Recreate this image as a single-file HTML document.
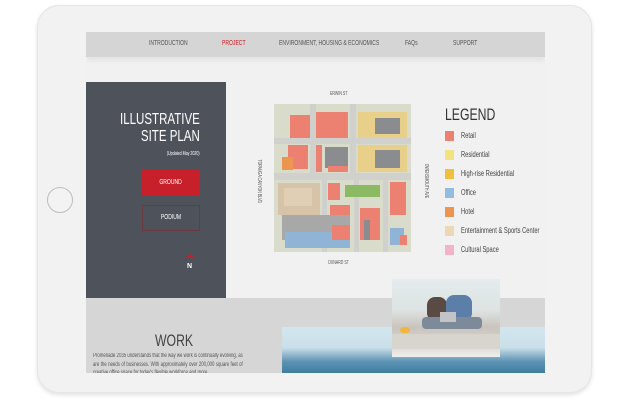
<!DOCTYPE html>
<html><head><meta charset="utf-8"><style>
*{margin:0;padding:0;box-sizing:border-box}
body{width:632px;height:400px;background:#fff;position:relative;overflow:hidden;font-family:"Liberation Sans",sans-serif}
.abs{position:absolute}
.c{display:inline-block;transform:scaleX(.72);transform-origin:left center;white-space:nowrap}
.cr{display:inline-block;transform:scaleX(.72);transform-origin:right center;white-space:nowrap}
.cc{display:inline-block;transform:scaleX(.72);transform-origin:center center;white-space:nowrap}
#frame{left:37px;top:5px;width:555px;height:388px;background:#f2f2f2;border-radius:22px;box-shadow:0 2px 4px rgba(0,0,0,.12),inset 0 0 0 1px #e6e6e6}
#btn{left:47px;top:187px;width:26px;height:26px;border-radius:50%;border:1px solid #bdbdbd;background:#f3f3f3}
#screen{left:86px;top:32px;width:459px;height:341px;background:#f1f1f1;overflow:hidden}
#nav{left:0;top:0;width:459px;height:25px;background:#d5d5d5;box-shadow:0 4px 5px rgba(0,0,0,.05)}
.nv{top:8px;font-size:7px;color:#555;white-space:nowrap}
#panel{left:0;top:50px;width:140px;height:216px;background:#4e535b}
.t{color:#fff;text-align:right;right:26px;font-size:16px;line-height:16px;width:120px}
#ground{left:56px;top:88px;width:58px;height:26px;background:#c8202a;color:#fff;font-size:7px;text-align:center;line-height:26px}
#podium{left:56px;top:123px;width:58px;height:26px;border:1px solid #6b3a40;color:#fff;font-size:7px;text-align:center;line-height:24px}
#gray{left:0;top:266px;width:459px;height:75px;background:#d6d6d6}
.lg{font-size:8px;color:#444;white-space:nowrap}
.sw{position:absolute;left:-16px;top:0;width:9px;height:10px}
</style></head><body>
<div id="frame" class="abs"></div>
<div id="btn" class="abs"></div>
<div id="screen" class="abs">
 <div id="gray" class="abs"></div>
 <div id="nav" class="abs">
  <div class="abs nv" style="left:63px"><span class="c">INTRODUCTION</span></div>
  <div class="abs nv" style="left:136px;color:#c8202a"><span class="c">PROJECT</span></div>
  <div class="abs nv" style="left:193px"><span class="c">ENVIRONMENT, HOUSING &amp; ECONOMICS</span></div>
  <div class="abs nv" style="left:319px"><span class="c">FAQs</span></div>
  <div class="abs nv" style="left:367px"><span class="c">SUPPORT</span></div>
 </div>
 <div id="panel" class="abs">
  <div class="abs t" style="top:30px"><span class="cr">ILLUSTRATIVE</span></div>
  <div class="abs t" style="top:47px"><span class="cr">SITE PLAN</span></div>
  <div class="abs t" style="top:69px;font-size:5px;line-height:6px"><span class="cr">(Updated May 2020)</span></div>
  <div id="ground" class="abs"><span class="cc">GROUND</span></div>
  <div id="podium" class="abs"><span class="cc">PODIUM</span></div>
  <svg class="abs" style="left:97px;top:170px" width="14" height="18"><path d="M1 7 L7 2 L13 7 L7 5 Z" fill="#c8202a"/><text x="4" y="16" font-size="7" fill="#fff" font-weight="bold" font-family="Liberation Sans">N</text></svg>
 </div>
 <div class="abs" style="left:244px;top:59px;font-size:5px;color:#555"><span class="c">ERWIN ST</span></div>
 <div class="abs" style="left:242px;top:228px;font-size:5px;color:#555"><span class="c">OXNARD ST</span></div>
 <div class="abs" style="left:143px;top:146px;font-size:5px;color:#555;transform:rotate(90deg);white-space:nowrap;width:60px;text-align:center"><span class="cc">TOPANGA CANYON BLVD</span></div>
 <div class="abs" style="left:310px;top:146px;font-size:5px;color:#555;transform:rotate(90deg);white-space:nowrap;width:60px;text-align:center"><span class="cc">OWENSMOUTH AVE</span></div>
 <svg class="abs" style="left:184px;top:68px" width="150" height="155" viewBox="0 0 150 155">
  <rect x="4" y="4" width="137" height="148" fill="#d9dccb"/>
  <rect x="4" y="38" width="137" height="6" fill="#d0d0cc"/>
  <rect x="4" y="73" width="137" height="7" fill="#d0d0cc"/>
  <rect x="40" y="4" width="6" height="70" fill="#d0d0cc"/>
  <rect x="80" y="4" width="6" height="70" fill="#d0d0cc"/>
  <rect x="52" y="80" width="5" height="72" fill="#d0d0cc"/>
  <rect x="84" y="80" width="5" height="72" fill="#d0d0cc"/>
  <rect x="113" y="80" width="5" height="72" fill="#d0d0cc"/>
  <rect x="20" y="15" width="20" height="23" fill="#ec8172"/>
  <rect x="46" y="12" width="32" height="26" fill="#ec8172"/>
  <rect x="88" y="12" width="49" height="26" fill="#e8d08a"/>
  <rect x="105" y="18" width="25" height="16" fill="#8a8c90"/>
  <rect x="18" y="45" width="20" height="24" fill="#ec8172"/>
  <rect x="12" y="57" width="11" height="13" fill="#ec9550"/>
  <rect x="46" y="45" width="6" height="27" fill="#ec8172"/>
  <rect x="55" y="47" width="23" height="21" fill="#8a8c90"/>
  <rect x="58" y="66" width="20" height="6" fill="#ec8172"/>
  <rect x="88" y="45" width="49" height="27" fill="#e8d08a"/>
  <rect x="105" y="50" width="25" height="18" fill="#8a8c90"/>
  <rect x="8" y="83" width="42" height="32" fill="#d6c3a8"/>
  <rect x="14" y="88" width="28" height="18" fill="#e0cfb5"/>
  <rect x="12" y="115" width="68" height="25" fill="#a8a8a8"/>
  <rect x="15" y="132" width="65" height="16" fill="#8fb4d6"/>
  <rect x="58" y="83" width="12" height="17" fill="#ec8172"/>
  <rect x="75" y="85" width="35" height="12" fill="#8cba62"/>
  <rect x="120" y="82" width="16" height="33" fill="#ec8172"/>
  <rect x="60" y="105" width="20" height="10" fill="#ec8172"/>
  <rect x="90" y="108" width="20" height="32" fill="#ec8172"/>
  <rect x="94" y="120" width="6" height="20" fill="#8a8c90"/>
  <rect x="120" y="128" width="14" height="17" fill="#8fb4d6"/>
  <rect x="130" y="135" width="7" height="10" fill="#ec8172"/>
  <rect x="62" y="125" width="18" height="15" fill="#ec8172"/>
 </svg>
 <div class="abs" style="left:359px;top:73px;font-size:17px;color:#333"><span class="c">LEGEND</span></div>
 <div class="abs lg" style="top:99px;left:375px"><span class="sw" style="background:#ec8172"></span><span class="c">Retail</span></div>
 <div class="abs lg" style="top:118px;left:375px"><span class="sw" style="background:#f3e27e"></span><span class="c">Residential</span></div>
 <div class="abs lg" style="top:137px;left:375px"><span class="sw" style="background:#f2bf3c"></span><span class="c">High-rise Residential</span></div>
 <div class="abs lg" style="top:156px;left:375px"><span class="sw" style="background:#92bde0"></span><span class="c">Office</span></div>
 <div class="abs lg" style="top:175px;left:375px"><span class="sw" style="background:#ec9550"></span><span class="c">Hotel</span></div>
 <div class="abs lg" style="top:194px;left:375px"><span class="sw" style="background:#eed7b5"></span><span class="c">Entertainment &amp; Sports Center</span></div>
 <div class="abs lg" style="top:213px;left:375px"><span class="sw" style="background:#f3b3cb"></span><span class="c">Cultural Space</span></div>
 <div class="abs" style="left:196px;top:295px;width:263px;height:46px;background:linear-gradient(180deg,#d3e6ee 0%,#c9dfe9 45%,#5d93b3 75%,#3f7da0 100%)"></div>
 <div class="abs" style="left:0;top:300px;width:196px;height:41px;background:#d6d6d6"></div>
 <div class="abs" style="left:69px;top:299px;font-size:17px;color:#444"><span class="c">WORK</span></div>
 <div class="abs" style="left:7px;top:320px;width:208px;font-size:6px;line-height:8.5px;color:#555;text-align:justify;transform:scaleX(.72);transform-origin:left top">Promenade 2035 understands that the way we work is continually evolving, as are the needs of businesses. With approximately over 200,000 square feet of creative office space for today's flexible workforce and more.</div>
 <div class="abs" style="left:306px;top:247px;width:108px;height:78px;background:linear-gradient(180deg,#e4ecee 0%,#dde3e2 40%,#c9c4bc 62%,#d6d2cc 80%,#eeeeec 100%);overflow:hidden">
  <div class="abs" style="left:35px;top:18px;width:20px;height:24px;background:#5a4a44;border-radius:8px"></div>
  <div class="abs" style="left:54px;top:16px;width:26px;height:26px;background:#5b7fa8;border-radius:8px"></div>
  <div class="abs" style="left:30px;top:38px;width:60px;height:12px;background:#7d8a9a;border-radius:4px"></div>
  <div class="abs" style="left:48px;top:33px;width:16px;height:10px;background:#c2c4c6"></div>
  <div class="abs" style="left:0;top:55px;width:108px;height:15px;background:#d8d4ce"></div>
  <div class="abs" style="left:8px;top:48px;width:10px;height:6px;background:#f0b640;border-radius:3px"></div>
 </div>
</div>
</body></html>
